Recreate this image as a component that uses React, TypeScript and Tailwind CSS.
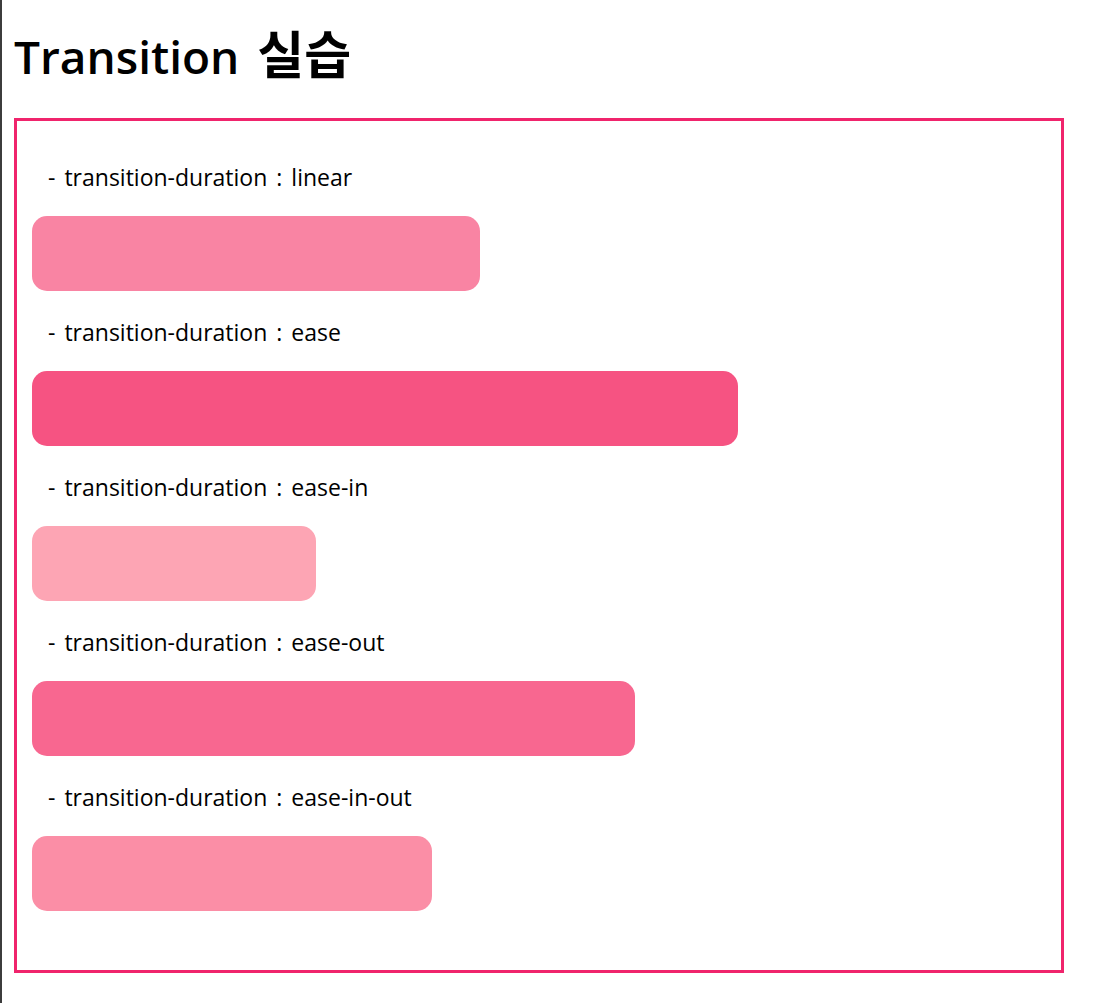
const bars = [
  { name: "linear", width: 448, color: "bg-[#f984a3]" },
  { name: "ease", width: 706, color: "bg-[#f65382]" },
  { name: "ease-in", width: 284, color: "bg-[#fda5b4]" },
  { name: "ease-out", width: 603, color: "bg-[#f86790]" },
  { name: "ease-in-out", width: 400, color: "bg-[#fb8ea6]" },
];

export default function App() {
  return (
    <main className="min-h-screen border-l-2 border-[#3c3c3c] bg-white pt-[22px] pr-[43px] pb-[30px] pl-3 font-['Open_Sans','Noto_Sans_CJK_KR',sans-serif] text-black">
      <h1 className="flex h-16 items-baseline gap-[18px] text-[46px] leading-[64px] font-semibold">
        <span>Transition</span> <span className="text-[51px] font-bold">실습</span>
      </h1>
      <section className="mt-8 border-3 border-[#f0246c] px-[15px] pt-9 pb-[59px]">
        {bars.map((bar) => (
          <div key={bar.name} className="mb-[21px] last:mb-0">
            <p className="flex gap-[9px] px-4 text-[23px] leading-[40px]">
              <span>-</span> <span>transition-duration</span> <span>:</span> <span>{bar.name}</span>
            </p>
            <div className={`mt-[19px] h-[75px] rounded-[15px] ${bar.color}`} style={{ width: bar.width }} />
          </div>
        ))}
      </section>
    </main>
  );
}
